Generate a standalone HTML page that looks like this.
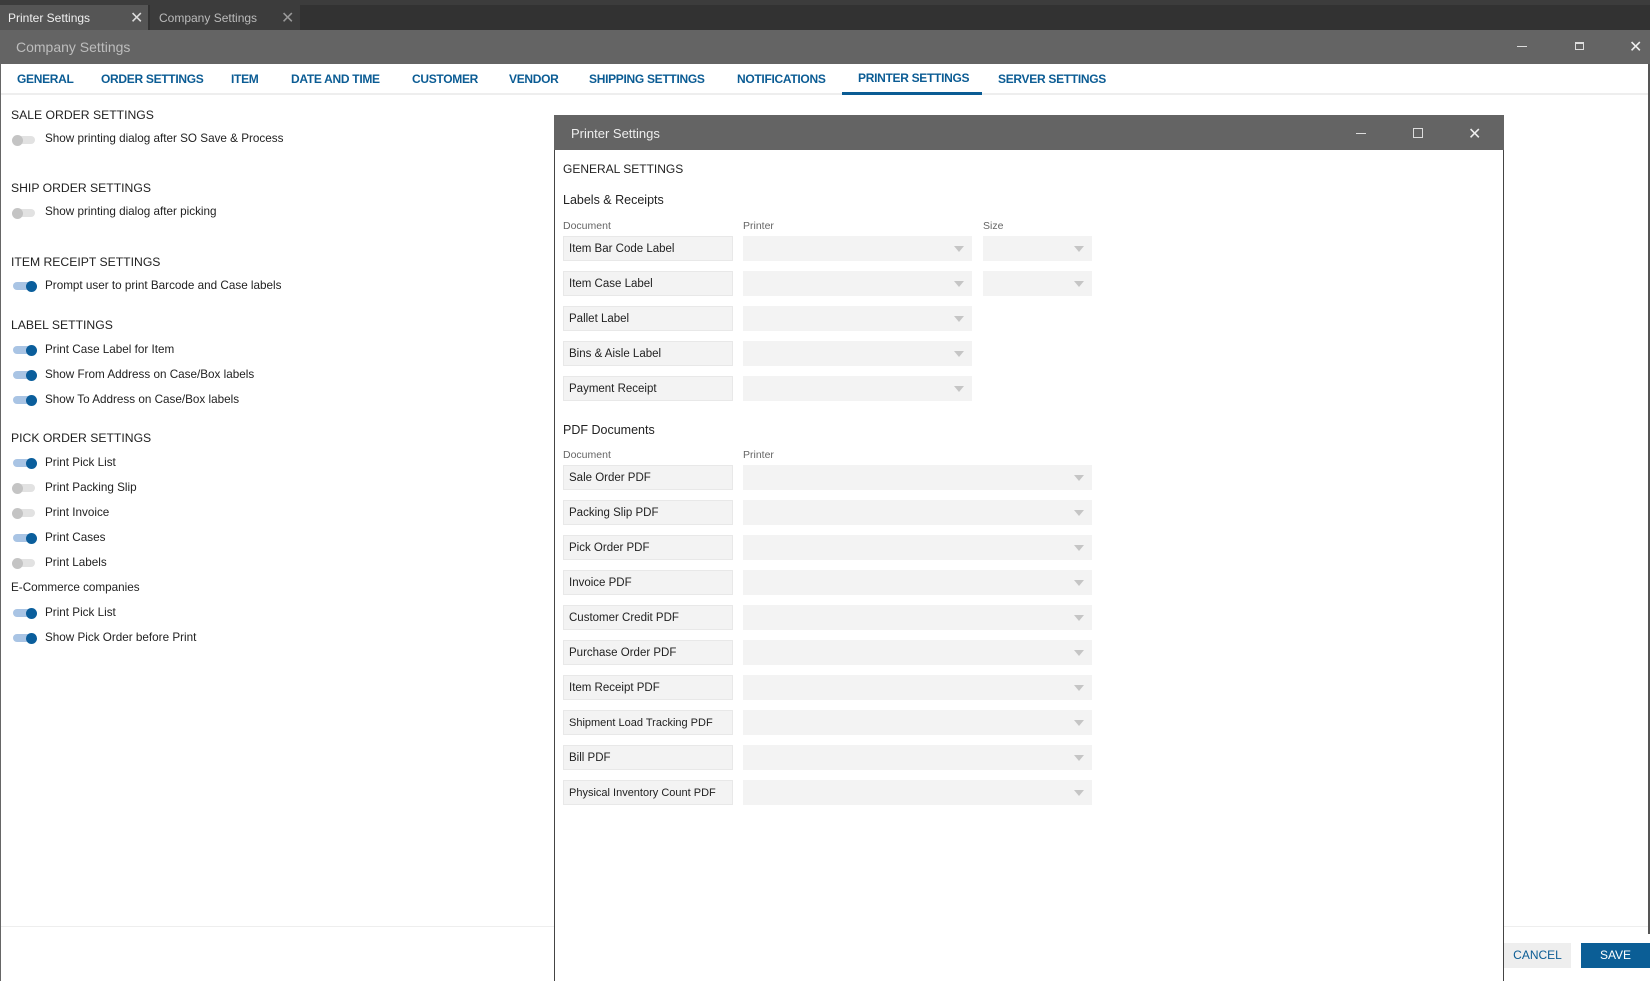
<!DOCTYPE html>
<html><head><meta charset="utf-8"><style>
*{margin:0;padding:0;box-sizing:border-box}
body{width:1650px;height:981px;overflow:hidden;background:#fff;font-family:"Liberation Sans",sans-serif;position:relative;color:#222}
.a{position:absolute;white-space:nowrap}
.nav{top:72px;font-size:12px;font-weight:bold;color:#0b5c94;letter-spacing:-0.3px}
.h{font-size:12.2px;color:#222;left:11px}
.t{font-size:11.7px;left:45px;color:#222}
.tg{position:absolute;left:12px;width:26px;height:12px}
.tg:before{content:"";position:absolute;left:1px;top:2px;width:22px;height:8px;border-radius:4px;background:#e2e2e2}
.tg:after{content:"";position:absolute;left:0;top:1px;width:11px;height:11px;border-radius:6px;background:#c4c4c4}
.tg.on:before{background:#a9c4e4}
.tg.on:after{left:14px;background:#0a5e9c}
.doc{position:absolute;left:563px;width:170px;height:25px;background:#f3f3f3;border:1px solid #e8e8e8;font-size:11.5px;line-height:25px;padding-left:5px;white-space:nowrap;overflow:hidden}
.sel{position:absolute;height:25px;background:#f3f3f3}
.sel:after{content:"";position:absolute;right:8px;top:10px;border-left:5px solid transparent;border-right:5px solid transparent;border-top:6px solid #c5c5c5}
.lbl{font-size:10.5px;color:#666}
</style></head><body>
<div class="a" style="left:0;top:0;width:1650px;height:5px;background:#3c3c3c"></div>
<div class="a" style="left:0;top:5px;width:1650px;height:25px;background:#323232"></div>
<div class="a" style="left:0;top:5px;width:148px;height:25px;background:#555"></div>
<div class="a" style="left:150px;top:5px;width:150px;height:25px;background:#3c3c3c"></div>
<div class="a" style="left:8px;top:11px;font-size:12px;color:#f0f0f0">Printer Settings</div>
<div class="a" style="left:130px;top:8px;font-size:16px;color:#ddd">✕</div>
<div class="a" style="left:159px;top:11px;font-size:12px;color:#bbb">Company Settings</div>
<div class="a" style="left:281px;top:8px;font-size:16px;color:#999">✕</div>
<div class="a" style="left:0;top:30px;width:1650px;height:34px;background:#646464"></div>
<div class="a" style="left:16px;top:39px;font-size:14px;color:#bdbdbd">Company Settings</div>
<div class="a" style="left:1517px;top:46px;width:10px;height:1px;background:#ddd"></div>
<div class="a" style="left:1575px;top:42px;width:9px;height:8px;border:1px solid #ddd;border-top-width:2px"></div>
<div class="a" style="left:1629px;top:37px;font-size:16px;color:#eee">✕</div>
<div class="a" style="left:0;top:64px;width:1px;height:917px;background:#666"></div>
<div class="a" style="left:1648px;top:64px;width:2px;height:870px;background:#555"></div>
<div class="a nav" style="left:17px">GENERAL</div>
<div class="a nav" style="left:101px">ORDER SETTINGS</div>
<div class="a nav" style="left:231px">ITEM</div>
<div class="a nav" style="left:291px">DATE AND TIME</div>
<div class="a nav" style="left:412px">CUSTOMER</div>
<div class="a nav" style="left:509px">VENDOR</div>
<div class="a nav" style="left:589px">SHIPPING SETTINGS</div>
<div class="a nav" style="left:737px">NOTIFICATIONS</div>
<div class="a nav" style="left:858px;top:71px">PRINTER SETTINGS</div>
<div class="a nav" style="left:998px">SERVER SETTINGS</div>
<div class="a" style="left:1px;top:93px;width:1647px;height:2px;background:#eee"></div>
<div class="a" style="left:842px;top:92px;width:140px;height:3px;background:#0b5c94"></div>

<div class="a h" style="top:108px">SALE ORDER SETTINGS</div>
<div class="tg" style="top:134px"></div><div class="a t" style="top:132px">Show printing dialog after SO Save &amp; Process</div>
<div class="a h" style="top:181px">SHIP ORDER SETTINGS</div>
<div class="tg" style="top:207px"></div><div class="a t" style="top:205px">Show printing dialog after picking</div>
<div class="a h" style="top:255px">ITEM RECEIPT SETTINGS</div>
<div class="tg on" style="top:280px"></div><div class="a t" style="top:279px">Prompt user to print Barcode and Case labels</div>
<div class="a h" style="top:318px">LABEL SETTINGS</div>
<div class="tg on" style="top:344px"></div><div class="a t" style="top:343px">Print Case Label for Item</div>
<div class="tg on" style="top:369px"></div><div class="a t" style="top:368px">Show From Address on Case/Box labels</div>
<div class="tg on" style="top:394px"></div><div class="a t" style="top:393px">Show To Address on Case/Box labels</div>
<div class="a h" style="top:431px">PICK ORDER SETTINGS</div>
<div class="tg on" style="top:457px"></div><div class="a t" style="top:456px">Print Pick List</div>
<div class="tg" style="top:482px"></div><div class="a t" style="top:481px">Print Packing Slip</div>
<div class="tg" style="top:507px"></div><div class="a t" style="top:506px">Print Invoice</div>
<div class="tg on" style="top:532px"></div><div class="a t" style="top:531px">Print Cases</div>
<div class="tg" style="top:557px"></div><div class="a t" style="top:556px">Print Labels</div>
<div class="a" style="left:11px;top:581px;font-size:11.7px">E-Commerce companies</div>
<div class="tg on" style="top:607px"></div><div class="a t" style="top:606px">Print Pick List</div>
<div class="tg on" style="top:632px"></div><div class="a t" style="top:631px">Show Pick Order before Print</div>

<div class="a" style="left:1px;top:926px;width:1647px;height:1px;background:#eee"></div>
<div class="a" style="left:1504px;top:943px;width:67px;height:25px;background:#eee;color:#0b5c94;font-size:12px;text-align:center;line-height:25px">CANCEL</div>
<div class="a" style="left:1581px;top:943px;width:69px;height:25px;background:#0b5e96;color:#fff;font-size:12px;text-align:center;line-height:25px">SAVE</div>

<!-- dialog -->
<div class="a" style="left:554px;top:115px;width:950px;height:866px;background:#fff;border:1px solid #444;border-bottom:none"></div>
<div class="a" style="left:554px;top:115px;width:950px;height:35px;background:#646464"></div>
<div class="a" style="left:571px;top:126px;font-size:13px;color:#eee">Printer Settings</div>
<div class="a" style="left:1356px;top:133px;width:10px;height:1px;background:#ddd"></div>
<div class="a" style="left:1413px;top:128px;width:10px;height:10px;border:1px solid #ddd"></div>
<div class="a" style="left:1468px;top:124px;font-size:16px;color:#eee">✕</div>
<div class="a" style="left:563px;top:162px;font-size:12px">GENERAL SETTINGS</div>
<div class="a" style="left:563px;top:193px;font-size:12.5px">Labels &amp; Receipts</div>
<div class="a lbl" style="left:563px;top:220px">Document</div>
<div class="a lbl" style="left:743px;top:220px">Printer</div>
<div class="a lbl" style="left:983px;top:220px">Size</div>
<div class="doc" style="top:236px">Item Bar Code Label</div><div class="sel" style="left:743px;top:236px;width:229px"></div><div class="sel" style="left:983px;top:236px;width:109px"></div>
<div class="doc" style="top:271px">Item Case Label</div><div class="sel" style="left:743px;top:271px;width:229px"></div><div class="sel" style="left:983px;top:271px;width:109px"></div>
<div class="doc" style="top:306px">Pallet Label</div><div class="sel" style="left:743px;top:306px;width:229px"></div>
<div class="doc" style="top:341px">Bins &amp; Aisle Label</div><div class="sel" style="left:743px;top:341px;width:229px"></div>
<div class="doc" style="top:376px">Payment Receipt</div><div class="sel" style="left:743px;top:376px;width:229px"></div>
<div class="a" style="left:563px;top:423px;font-size:12.5px">PDF Documents</div>
<div class="a lbl" style="left:563px;top:449px">Document</div>
<div class="a lbl" style="left:743px;top:449px">Printer</div>
<div class="doc" style="top:465px">Sale Order PDF</div><div class="sel" style="left:743px;top:465px;width:349px"></div>
<div class="doc" style="top:500px">Packing Slip PDF</div><div class="sel" style="left:743px;top:500px;width:349px"></div>
<div class="doc" style="top:535px">Pick Order PDF</div><div class="sel" style="left:743px;top:535px;width:349px"></div>
<div class="doc" style="top:570px">Invoice PDF</div><div class="sel" style="left:743px;top:570px;width:349px"></div>
<div class="doc" style="top:605px">Customer Credit PDF</div><div class="sel" style="left:743px;top:605px;width:349px"></div>
<div class="doc" style="top:640px">Purchase Order PDF</div><div class="sel" style="left:743px;top:640px;width:349px"></div>
<div class="doc" style="top:675px">Item Receipt PDF</div><div class="sel" style="left:743px;top:675px;width:349px"></div>
<div class="doc" style="top:710px;font-size:11px">Shipment Load Tracking PDF</div><div class="sel" style="left:743px;top:710px;width:349px"></div>
<div class="doc" style="top:745px">Bill PDF</div><div class="sel" style="left:743px;top:745px;width:349px"></div>
<div class="doc" style="top:780px;font-size:11px">Physical Inventory Count PDF</div><div class="sel" style="left:743px;top:780px;width:349px"></div>
</body></html>
